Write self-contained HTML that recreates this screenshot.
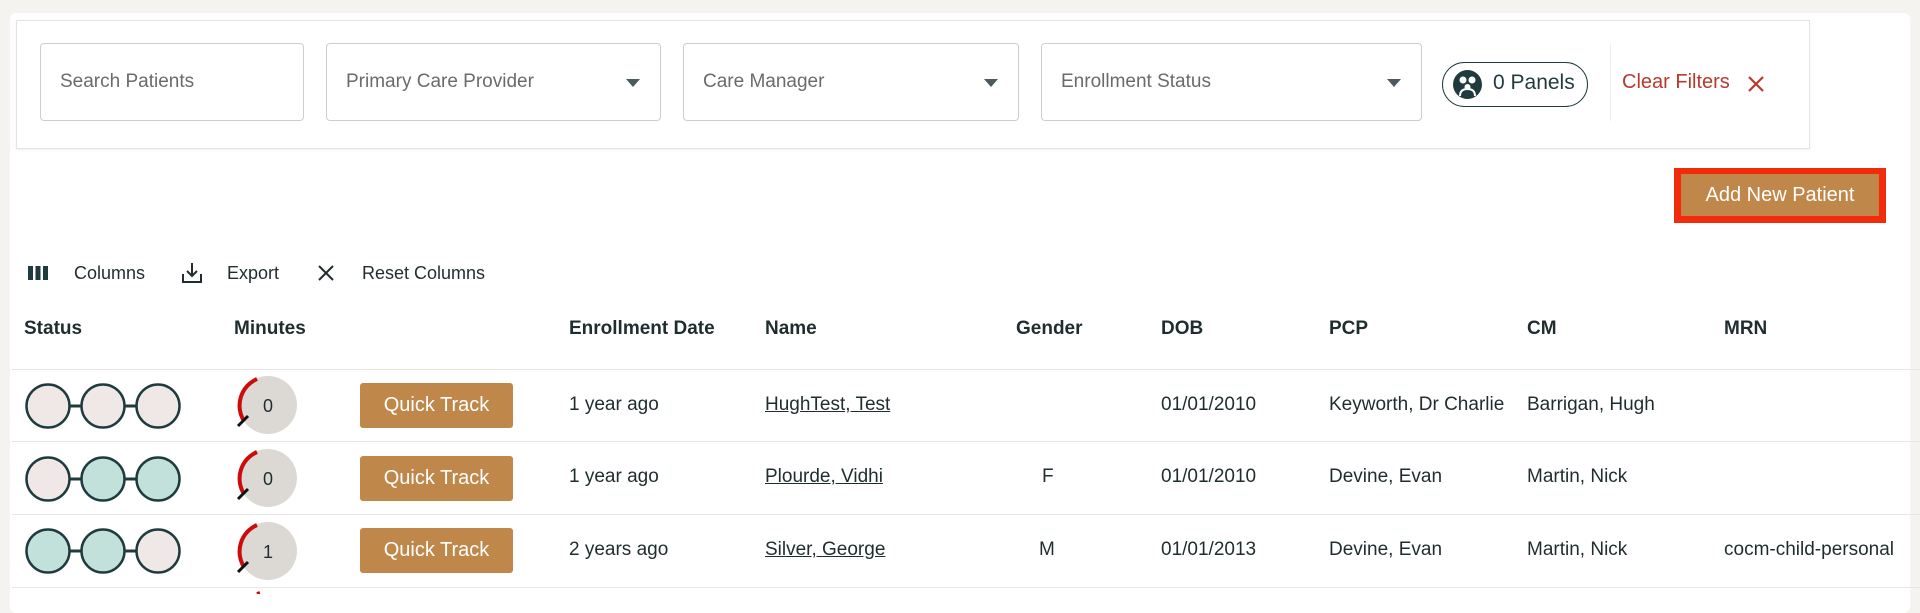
<!DOCTYPE html>
<html><head><meta charset="utf-8"><style>
*{margin:0;padding:0;box-sizing:border-box}
body{width:1920px;height:594px;overflow:hidden;background:#f5f3ef;font-family:"Liberation Sans",sans-serif;color:#1f2d2f;position:relative}
.card{position:absolute;left:10px;top:13px;width:1900px;height:600px;background:#fff;border-radius:6px}
.filt{position:absolute;left:16px;top:20px;width:1794px;height:129px;background:#fff;border:1px solid #e6e4e0;box-shadow:0 1px 3px rgba(0,0,0,.06)}
.inp{position:absolute;top:43px;height:78px;border:1px solid #cfcdca;border-radius:4px;background:#fff;font-size:19px;color:#6b6b6b;padding-left:19px;line-height:76px}
.arr{position:absolute;right:20px;top:35px;width:0;height:0;border-left:7px solid transparent;border-right:7px solid transparent;border-top:8px solid #4b5a5c}
.abs{position:absolute;white-space:nowrap}
.t{font-size:19px}
.h{font-size:19px;font-weight:bold;color:#1f2d2f}
.line{position:absolute;left:12px;width:1908px;height:1px;background:#e8e6e3}
.qt{position:absolute;left:360px;width:153px;height:45px;background:#c0874a;border-radius:3px;color:#fff;font-size:20px;text-align:center;line-height:45px}
u{color:#1f2d2f;text-decoration:underline}
</style></head><body>
<div class="card"></div>
<div class="filt"></div>
<div class="inp" style="left:40px;width:264px">Search Patients</div>
<div class="inp" style="left:326px;width:335px">Primary Care Provider<div class="arr"></div></div>
<div class="inp" style="left:683px;width:336px">Care Manager<div class="arr"></div></div>
<div class="inp" style="left:1041px;width:381px">Enrollment Status<div class="arr"></div></div>
<div class="abs" style="left:1442px;top:62px;width:146px;height:45px;border:1.5px solid #1f3b3e;border-radius:23px"></div>
<svg class="abs" style="left:1452px;top:69px" width="31" height="31" viewBox="0 0 31 31"><circle cx="15.5" cy="15.5" r="14.5" fill="#1f3b3e"/><circle cx="11" cy="11" r="3.5" fill="#fff"/><circle cx="20" cy="11" r="3.5" fill="#fff"/><circle cx="15.5" cy="18" r="3" fill="#fff"/><path d="M8 27c0-5 3-7 7.5-7s7.5 2 7.5 7" fill="none" stroke="#fff" stroke-width="2"/></svg>
<div class="abs" style="left:1493px;top:71px;font-size:21px;color:#1f3b3e">0 Panels</div>
<div class="abs" style="left:1610px;top:43px;width:1px;height:78px;background:#eee"></div>
<div class="abs" style="left:1622px;top:71px;font-size:20px;color:#b83a2e">Clear Filters</div>
<svg class="abs" style="left:1747px;top:75px" width="18" height="18"><path d="M2 2L16 16M16 2L2 16" stroke="#b83a2e" stroke-width="2.2"/></svg>
<div class="abs" style="left:1674px;top:168px;width:212px;height:55px;background:#f22b0c"></div>
<div class="abs" style="left:1681px;top:174px;width:198px;height:42px;background:#c0874a;color:#fff;font-size:20px;text-align:center;line-height:42px">Add New Patient</div>

<svg class="abs" style="left:28px;top:265px" width="20" height="16"><rect x="0" y="1" width="5" height="14" fill="#1f3b3e"/><rect x="7.5" y="1" width="5" height="14" fill="#1f3b3e"/><rect x="15" y="1" width="5" height="14" fill="#1f3b3e"/></svg>
<div class="abs" style="left:74px;top:263px;font-size:18px">Columns</div>
<svg class="abs" style="left:182px;top:262px" width="20" height="22"><path d="M10 1v13M5 9l5 5 5-5M1 12v8h18v-8" fill="none" stroke="#1f2d2f" stroke-width="2"/></svg>
<div class="abs" style="left:227px;top:263px;font-size:18px">Export</div>
<svg class="abs" style="left:318px;top:265px" width="16" height="16"><path d="M1 1L15 15M15 1L1 15" stroke="#1f2d2f" stroke-width="2"/></svg>
<div class="abs" style="left:362px;top:263px;font-size:18px">Reset Columns</div>

<div class="abs h" style="left:24px;top:318px">Status</div>
<div class="abs h" style="left:234px;top:318px">Minutes</div>
<div class="abs h" style="left:569px;top:318px">Enrollment Date</div>
<div class="abs h" style="left:765px;top:318px">Name</div>
<div class="abs h" style="left:1016px;top:318px">Gender</div>
<div class="abs h" style="left:1161px;top:318px">DOB</div>
<div class="abs h" style="left:1329px;top:318px">PCP</div>
<div class="abs h" style="left:1527px;top:318px">CM</div>
<div class="abs h" style="left:1724px;top:318px">MRN</div>
<div class="line" style="top:369px"></div>
<div class="line" style="top:441px"></div>
<div class="line" style="top:514px"></div>
<div class="line" style="top:587px"></div>

<svg class="abs" style="left:24px;top:381px" width="160" height="50"><path d="M44 25h16M99 25h16" stroke="#1f3b3e" stroke-width="3"/><circle cx="24" cy="25" r="21.5" fill="#efe8e6" stroke="#1f3b3e" stroke-width="2.5"/><circle cx="79" cy="25" r="21.5" fill="#efe8e6" stroke="#1f3b3e" stroke-width="2.5"/><circle cx="134" cy="25" r="21.5" fill="#efe8e6" stroke="#1f3b3e" stroke-width="2.5"/></svg>
<svg class="abs" style="left:24px;top:454px" width="160" height="50"><path d="M44 25h16M99 25h16" stroke="#1f3b3e" stroke-width="3"/><circle cx="24" cy="25" r="21.5" fill="#efe8e6" stroke="#1f3b3e" stroke-width="2.5"/><circle cx="79" cy="25" r="21.5" fill="#c2e1da" stroke="#1f3b3e" stroke-width="2.5"/><circle cx="134" cy="25" r="21.5" fill="#c2e1da" stroke="#1f3b3e" stroke-width="2.5"/></svg>
<svg class="abs" style="left:24px;top:526px" width="160" height="50"><path d="M44 25h16M99 25h16" stroke="#1f3b3e" stroke-width="3"/><circle cx="24" cy="25" r="21.5" fill="#c2e1da" stroke="#1f3b3e" stroke-width="2.5"/><circle cx="79" cy="25" r="21.5" fill="#c2e1da" stroke="#1f3b3e" stroke-width="2.5"/><circle cx="134" cy="25" r="21.5" fill="#efe8e6" stroke="#1f3b3e" stroke-width="2.5"/></svg>

<svg class="abs" style="left:232px;top:373px" width="70" height="66"><circle cx="36" cy="32" r="29" fill="#dcd9d4"/><path d="M25 6A29 29 0 0 0 12 48" fill="none" stroke="#cc0c0c" stroke-width="4"/><path d="M6 53L16 43" stroke="#111" stroke-width="3"/><text x="36" y="39" font-size="18" text-anchor="middle" font-family="Liberation Sans" fill="#1f2d2f">0</text></svg>
<svg class="abs" style="left:232px;top:446px" width="70" height="66"><circle cx="36" cy="32" r="29" fill="#dcd9d4"/><path d="M25 6A29 29 0 0 0 12 48" fill="none" stroke="#cc0c0c" stroke-width="4"/><path d="M6 53L16 43" stroke="#111" stroke-width="3"/><text x="36" y="39" font-size="18" text-anchor="middle" font-family="Liberation Sans" fill="#1f2d2f">0</text></svg>
<svg class="abs" style="left:232px;top:519px" width="70" height="66"><circle cx="36" cy="32" r="29" fill="#dcd9d4"/><path d="M25 6A29 29 0 0 0 12 48" fill="none" stroke="#cc0c0c" stroke-width="4"/><path d="M6 53L16 43" stroke="#111" stroke-width="3"/><text x="36" y="39" font-size="18" text-anchor="middle" font-family="Liberation Sans" fill="#1f2d2f">1</text></svg>
<svg class="abs" style="left:232px;top:588px" width="70" height="6"><path d="M25 6A29 29 0 0 1 28 5" fill="none" stroke="#cc0c0c" stroke-width="4"/></svg>

<div class="qt" style="top:383px">Quick Track</div>
<div class="qt" style="top:456px">Quick Track</div>
<div class="qt" style="top:528px">Quick Track</div>

<div class="abs t" style="left:569px;top:394px">1 year ago</div>
<div class="abs t" style="left:765px;top:394px"><u>HughTest, Test</u></div>
<div class="abs t" style="left:1161px;top:394px">01/01/2010</div>
<div class="abs t" style="left:1329px;top:394px;width:189px;overflow:hidden">Keyworth, Dr Charlie</div>
<div class="abs t" style="left:1527px;top:394px">Barrigan, Hugh</div>

<div class="abs t" style="left:569px;top:466px">1 year ago</div>
<div class="abs t" style="left:765px;top:466px"><u>Plourde, Vidhi</u></div>
<div class="abs t" style="left:1042px;top:466px">F</div>
<div class="abs t" style="left:1161px;top:466px">01/01/2010</div>
<div class="abs t" style="left:1329px;top:466px">Devine, Evan</div>
<div class="abs t" style="left:1527px;top:466px">Martin, Nick</div>

<div class="abs t" style="left:569px;top:539px">2 years ago</div>
<div class="abs t" style="left:765px;top:539px"><u>Silver, George</u></div>
<div class="abs t" style="left:1039px;top:539px">M</div>
<div class="abs t" style="left:1161px;top:539px">01/01/2013</div>
<div class="abs t" style="left:1329px;top:539px">Devine, Evan</div>
<div class="abs t" style="left:1527px;top:539px">Martin, Nick</div>
<div class="abs t" style="left:1724px;top:539px;width:186px;overflow:hidden">cocm-child-personal</div>
</body></html>
